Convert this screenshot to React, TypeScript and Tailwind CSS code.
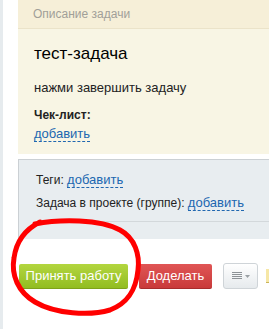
import React from "react";

export default function App() {
  const font = { fontFamily: '"Liberation Sans", Arial, sans-serif' };
  return (
    <div className="relative w-[269px] h-[329px] overflow-hidden bg-white flex" style={font}>
      <div className="w-[3px] shrink-0 bg-[#e6ebee]" />
      <div className="flex flex-col pl-[15px] w-[320px] shrink-0">
        {/* Description panel */}
        <div className="bg-[#f8f5e4]">
          <div className="h-[29px] bg-[#f6efd8] border-b border-[#ebe3c9] flex items-center pl-[15px] text-[12px] text-[#a19f98]">
            Описание задачи
          </div>
          <div className="pl-[16px] pt-[14px] pb-[12px]">
            <div className="text-[17px] leading-[22px] text-[#000]">тест-задача</div>
            <div className="mt-[15px] text-[13px] leading-[16px] text-[#222]">нажми завершить задачу</div>
            <div className="mt-[12px] text-[12px] leading-[15px] font-bold text-[#222]">Чек-лист:</div>
            <div className="mt-[3px] text-[13px] leading-[16px]">
              <span className="text-[#2067b0] border-b border-dashed border-[#2067b0]">добавить</span>
            </div>
          </div>
        </div>
        {/* Meta panel */}
        <div className="mt-[5px] h-[80px] bg-[#e8edf0] border-t border-l border-[#cbd0d4] pl-[17px] pt-[12px]">
          <div className="text-[12px] leading-[15px] text-[#222]">
            Теги:{" "}
            <span className="text-[#2067b0] text-[13px] border-b border-dashed border-[#2067b0]">добавить</span>
          </div>
          <div className="mt-[7px] text-[12px] leading-[15px] text-[#222]">
            Задача в проекте (группе):{" "}
            <span className="text-[#2067b0] text-[13px] border-b border-dashed border-[#2067b0]">добавить</span>
          </div>
          <div className="mt-[10px] h-px bg-[#d3d8db]" />
        </div>
        {/* Buttons */}
        <div className="mt-[24px] flex items-center pl-[1px]">
          <div className="h-[25px] w-[109px] flex items-center justify-center rounded-[2px] bg-gradient-to-b from-[#b3d63f] to-[#92bd20] border-b border-[#7ea21a] text-white text-[13px]">
            Принять работу
          </div>
          <div className="ml-[11px] h-[25px] w-[73px] flex items-center justify-center rounded-[2px] bg-gradient-to-b from-[#e05555] to-[#c93a3a] border-b border-[#a82c2c] text-white text-[13px]">
            Доделать
          </div>
          <div className="ml-[11px] h-[26px] w-[35px] flex items-center justify-center gap-[3px] rounded-[3px] bg-gradient-to-b from-[#ffffff] to-[#e6eaed] border border-[#cfd4d8]">
            <svg width="10" height="8" viewBox="0 0 10 8">
              <rect x="0" y="0" width="10" height="1" fill="#8d9296" />
              <rect x="0" y="2" width="10" height="1" fill="#8d9296" />
              <rect x="0" y="4" width="10" height="1" fill="#8d9296" />
              <rect x="0" y="6" width="10" height="1" fill="#8d9296" />
            </svg>
            <svg width="5" height="3" viewBox="0 0 5 3">
              <path d="M0 0 L5 0 L2.5 3 Z" fill="#9aa0a4" />
            </svg>
          </div>
          <div className="ml-[8px] w-[4px] h-[14px] bg-[#f6e7a6] border-b border-[#c9b45a]" />
        </div>
      </div>
      {/* Red hand-drawn circle */}
      <svg className="absolute left-0 top-0 pointer-events-none" width="269" height="329" viewBox="0 0 269 329">
        <path
          d="M 35 224 C 60 219, 100 219, 120 230 C 135 238, 140 255, 138 270 C 136 290, 128 303, 110 310 C 90 316, 55 314, 35 302 C 18 292, 11 275, 14 258 C 16 243, 24 230, 40 222"
          fill="none"
          stroke="#ff0000"
          strokeWidth="5"
          strokeLinecap="round"
          strokeLinejoin="round"
        />
      </svg>
    </div>
  );
}
